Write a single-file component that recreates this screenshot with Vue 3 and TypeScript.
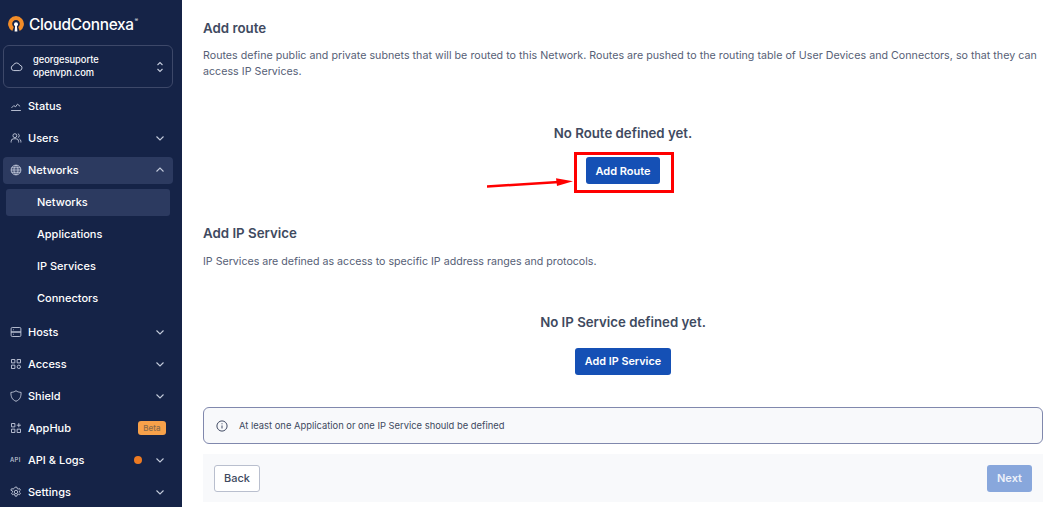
<script setup lang="ts">
interface NavItem { label: string; icon: string; chevron?: 'up' | 'down'; active?: boolean; beta?: boolean; dot?: boolean }
const top: NavItem[] = [
  { label: 'Status', icon: 'status' },
  { label: 'Users', icon: 'users', chevron: 'down' },
  { label: 'Networks', icon: 'globe', chevron: 'up', active: true },
]
const subs = ['Networks', 'Applications', 'IP Services', 'Connectors']
const bottom: NavItem[] = [
  { label: 'Hosts', icon: 'hosts', chevron: 'down' },
  { label: 'Access', icon: 'access', chevron: 'down' },
  { label: 'Shield', icon: 'shield', chevron: 'down' },
  { label: 'AppHub', icon: 'apphub', beta: true },
  { label: 'API & Logs', icon: 'api', chevron: 'down', dot: true },
  { label: 'Settings', icon: 'settings', chevron: 'down' },
]
const iconPaths: Record<string, string> = {
  status: 'M1.500 14h13M2 10.500l3-3 2.500 1.500 2.500-3.500 3.500 3',
  users: 'M6.500 7.500a2.600 2.600 0 1 0 0-5.200 2.600 2.600 0 0 0 0 5.200zM1.500 14v-1.500a3.500 3.500 0 0 1 3.500-3.500h3a3.500 3.500 0 0 1 3.500 3.500V14M10.500 2.400a2.600 2.600 0 0 1 0 5M12.500 9.300a3.500 3.500 0 0 1 2 3.200V14',
  globe: 'M8 14.500a6.500 6.500 0 1 0 0-13 6.500 6.500 0 0 0 0 13zM1.500 8h13M2.300 5h11.400M2.300 11h11.400M8 1.500c-3.600 3.800-3.600 9.200 0 13M8 1.500c3.600 3.800 3.600 9.200 0 13',
  hosts: 'M3 2h10a1.500 1.500 0 0 1 1.500 1.500V8h-13V3.500A1.500 1.500 0 0 1 3 2zM1.500 8h13v4.500A1.500 1.500 0 0 1 13 14H3a1.500 1.500 0 0 1-1.500-1.500zM4 5h1M4 11h1',
  access: 'M2 2h4.500v4.500H2zM9.500 2H14v4.500H9.500zM2 9.500h4.500V14H2zM11.750 9.500a2.250 2.250 0 1 0 0 4.500 2.250 2.250 0 0 0 0-4.500z',
  shield: 'M8 1c2 1.500 4.300 2 6.800 2.200 0 5.600-1.300 9.800-6.800 11.800C2.500 13 1.200 8.800 1.200 3.200 3.700 3 6 2.500 8 1z',
  apphub: 'M2 2h4.500v4.500H2zM2 9.500h4.500V14H2zM9.500 9.500H14V14H9.500zM11.750 1.500v5.500M9 4.250h5.500',
  settings: 'M8 10.300a2.300 2.300 0 1 0 0-4.600 2.300 2.300 0 0 0 0 4.600zM6.800 1.500h2.400l.4 1.900 1.300.7 1.800-.7 1.200 2.100-1.400 1.300v1.400l1.400 1.300-1.200 2.100-1.800-.7-1.300.7-.4 1.900H6.800l-.4-1.900-1.300-.7-1.800.7-1.200-2.100 1.400-1.300V6.800L1.100 5.500l1.200-2.100 1.800.7 1.300-.7z',
}
</script>

<template>
  <div class="app">
    <aside class="side">
      <div class="logo">
        <svg class="logo-mark" viewBox="0 0 16 16" width="16" height="16">
          <path d="M4.300 14.900A7.900 7.900 0 1 1 11.700 14.900L10.200 11A3.800 3.800 0 1 0 5.800 11Z" fill="#f28c28" />
          <circle cx="8" cy="8.300" r="2" fill="#fff" />
          <path d="M7.200 9h1.600l.6 6.500H6.600z" fill="#fff" />
        </svg>
        <span class="logo-text">CloudConnexa</span><sup class="reg">®</sup>
      </div>
      <div class="workspace">
        <svg class="ws-cloud" viewBox="0 0 16 16" width="13" height="13" fill="none" stroke="#c4cbdc" stroke-width="1.200">
          <path d="M4.500 13a3.300 3.300 0 0 1-.4-6.500A4.200 4.200 0 0 1 12 6.300 3.400 3.400 0 0 1 12 13z" />
        </svg>
        <div class="ws-name"><span>georgesuporte</span><span>openvpn.com</span></div>
        <svg class="ws-sort" viewBox="0 0 10 16" width="10" height="16" fill="none" stroke="#c4cbdc" stroke-width="1.100">
          <path d="M2.500 6L5 3.500 7.500 6M2.500 10L5 12.500 7.500 10" />
        </svg>
      </div>
      <nav class="nav">
        <div v-for="item in top" :key="item.label" class="row" :class="{ active: item.active }">
          <svg class="ico" viewBox="0 0 16 16" width="16" height="16" fill="none" stroke="#c4cbdc" stroke-width="1.200">
            <path :d="iconPaths[item.icon]" />
          </svg>
          <span class="label">{{ item.label }}</span>
          <svg v-if="item.chevron" class="chev" viewBox="0 0 10 10" width="10" height="10" fill="none" stroke="#c4cbdc" stroke-width="1.100">
            <path :d="item.chevron === 'up' ? 'M1.500 6.500L5 3l3.500 3.500' : 'M1.500 3.500L5 7l3.500-3.500'" />
          </svg>
        </div>
        <div v-for="(s, i) in subs" :key="s" class="sub" :class="{ current: i === 0 }">{{ s }}</div>
        <div class="gap"></div>
        <div v-for="item in bottom" :key="item.label" class="row">
          <span v-if="item.icon === 'api'" class="ico api-ico">API</span>
          <svg v-else class="ico" viewBox="0 0 16 16" width="16" height="16" fill="none" stroke="#c4cbdc" stroke-width="1.200">
            <path :d="iconPaths[item.icon]" />
          </svg>
          <span class="label">{{ item.label }}</span>
          <span v-if="item.beta" class="beta">Beta</span>
          <span v-if="item.dot" class="dot"></span>
          <svg v-if="item.chevron" class="chev" viewBox="0 0 10 10" width="10" height="10" fill="none" stroke="#c4cbdc" stroke-width="1.100">
            <path d="M1.500 3.500L5 7l3.500-3.500" />
          </svg>
        </div>
      </nav>
    </aside>

    <main class="main">
      <h2 class="title first">Add route</h2>
      <p class="desc d1">Routes define public and private subnets that will be routed to this Network. Routes are pushed to the routing table of User Devices and Connectors, so that they can access IP Services.</p>
      <div class="empty route-empty">
        <div class="empty-text">No Route defined yet.</div>
        <div class="annotated">
          <button class="btn primary add-route">Add Route</button>
          <span class="red-box"></span>
          <svg class="red-arrow" viewBox="0 0 90 12" width="90" height="12">
            <path d="M0 9.500L72 5" stroke="#f00" stroke-width="2.500" fill="none" />
            <path d="M69 1.300L86 4.300 70 9z" fill="#f00" />
          </svg>
        </div>
      </div>
      <h2 class="title">Add IP Service</h2>
      <p class="desc d2">IP Services are defined as access to specific IP address ranges and protocols.</p>
      <div class="empty ip-empty">
        <div class="empty-text">No IP Service defined yet.</div>
        <button class="btn primary add-ip">Add IP Service</button>
      </div>
      <div class="notice">
        <svg viewBox="0 0 16 16" width="12" height="12" fill="none" stroke="#3d4660" stroke-width="1.300">
          <circle cx="8" cy="8" r="6.800" />
          <path d="M8 7.300v4M8 4.400v1.300" />
        </svg>
        <span>At least one Application or one IP Service should be defined</span>
      </div>
      <div class="footer">
        <button class="btn back">Back</button>
        <button class="btn next">Next</button>
      </div>
    </main>
  </div>
</template>

<style scoped>
.app {
  display: flex;
  width: 1064px;
  height: 507px;
  overflow: hidden;
  background: #fff;
  font-family: Inter, "Liberation Sans", sans-serif;
}
.side {
  width: 182px;
  flex: none;
  background: #152347;
  padding: 0 9px 0 3px;
  box-sizing: border-box;
  color: #fff;
}
.logo {
  height: 45px;
  display: flex;
  align-items: center;
  padding: 3px 0 0 5px;
  box-sizing: border-box;
}
.logo-mark { margin-right: 5px; flex: none; }
.logo-text { font-size: 15.400px; font-weight: 500; letter-spacing: -0.300px; color: #fff; }
.reg { font-size: 5px; align-self: flex-start; margin-top: 14px; margin-left: 1px; line-height: 6px; }
.workspace {
  height: 43px;
  width: 170px;
  box-sizing: border-box;
  border: 1px solid #3d4869;
  border-radius: 6px;
  display: flex;
  align-items: center;
  padding: 0 7px 0 6px;
}
.ws-cloud { flex: none; }
.ws-name {
  display: flex;
  flex-direction: column;
  flex: 1;
  margin: -1px 0 0 10px;
  font-size: 9.300px;
  line-height: 13px;
  font-weight: 500;
}
.nav { margin-top: 2px; display: flex; flex-direction: column; }
.row {
  height: 32px;
  width: 170px;
  display: flex;
  align-items: center;
  padding: 0 8px 0 7px;
  box-sizing: border-box;
  border-radius: 4px;
  font-size: 11px;
  font-weight: 500;
}
.row.active { background: #2c3a60; height: 27px; margin: 3px 0 2px; padding-bottom: 1px; }
.ico { width: 12px; height: 12px; flex: none; }
.api-ico { font-size: 6px; font-weight: 500; color: #c4cbdc; line-height: 12px; letter-spacing: 0.300px; }
.label { margin-left: 6px; flex: 1; }
.chev { flex: none; }
.sub {
  height: 32px;
  display: flex;
  align-items: center;
  font-size: 11px;
  font-weight: 500;
  padding-left: 34px;
  box-sizing: border-box;
}
.sub.current {
  background: #2c3a60;
  border-radius: 3px;
  height: 27px;
  margin: 3px 0 2px 3px;
  padding-left: 31px;
  padding-bottom: 1px;
  width: 164px;
}
.gap { height: 2px; }
.beta {
  background: #f7a14a;
  color: #8a6a4a;
  font-size: 8px;
  border-radius: 3px;
  width: 28px;
  height: 14px;
  display: flex;
  align-items: center;
  justify-content: center;
  margin-right: -1px;
}
.dot {
  width: 8px;
  height: 8px;
  border-radius: 50%;
  background: #ec7a22;
  margin-right: 13px;
}
.main {
  flex: 1;
  padding: 0 21px;
  box-sizing: border-box;
  color: #404a60;
}
.title { margin: 0; font-size: 13.300px; font-weight: 600; line-height: 18px; color: #404a60; }
.title.first { padding-top: 19px; }
.desc {
  font-size: 10.650px;
  line-height: 16px;
  color: #566076;
}
.d1 { margin: 11px 0 0; letter-spacing: 0.033px; }
.d2 { margin: 12px 0 0; }
.empty { display: flex; flex-direction: column; align-items: center; box-sizing: border-box; }
.route-empty { padding-top: 44px; height: 144px; }
.ip-empty { padding-top: 43px; height: 137px; }
.empty-text { font-size: 13.250px; font-weight: 600; line-height: 18px; color: #404a60; }
.annotated { position: relative; margin-top: 15px; }
.btn {
  font-family: inherit;
  font-size: 11px;
  font-weight: 600;
  border-radius: 3px;
  box-sizing: border-box;
  padding: 0;
  height: 27px;
}
.primary { background: #1550b5; color: #fff; border: none; }
.add-route { width: 74px; display: block; }
.add-ip { width: 96px; margin-top: 17px; font-size: 10.800px; }
.red-box {
  position: absolute;
  left: -12px;
  top: -5px;
  width: 100px;
  height: 41px;
  border: 3px solid #f00;
  box-sizing: border-box;
}
.red-arrow { position: absolute; left: -99px; top: 20px; }
.notice {
  height: 37px;
  box-sizing: border-box;
  border: 1px solid #8088ad;
  border-radius: 6px;
  background: #f8f9fb;
  display: flex;
  align-items: center;
  gap: 11px;
  padding-left: 12px;
  font-size: 9.400px;
  color: #404a60;
}
.footer {
  margin-top: 10px;
  height: 48px;
  background: #f8f9fb;
  display: flex;
  align-items: center;
  justify-content: space-between;
  padding: 0 11px;
}
.back { width: 46px; background: #fff; border: 1px solid #b9bfce; color: #404a60; font-weight: 500; }
.next { width: 45px; background: #88a7dc; border: none; color: #eef2fa; }
</style>
